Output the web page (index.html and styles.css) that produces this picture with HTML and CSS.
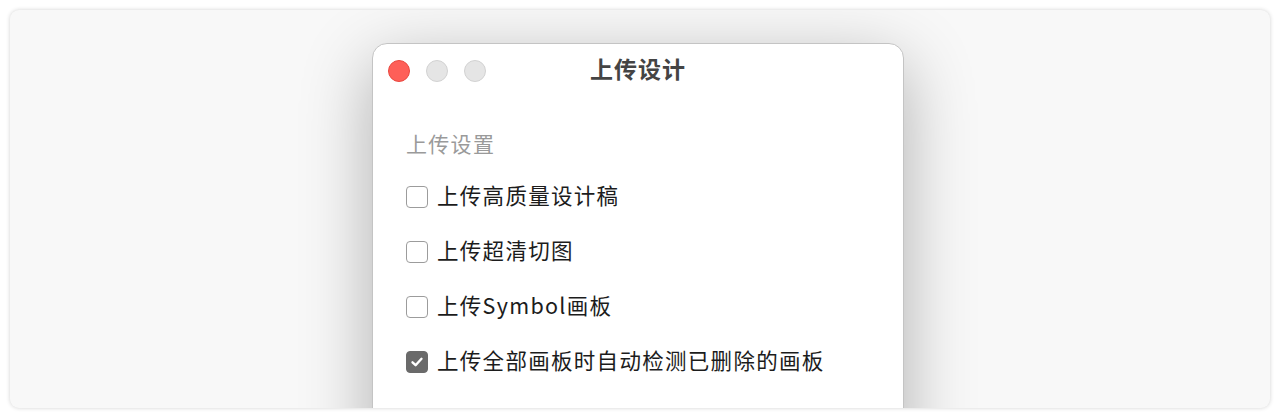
FILE: index.html
```
<!DOCTYPE html>
<html lang="zh-CN">
<head>
    <meta charset="UTF-8">
    <meta name="viewport" content="width=device-width, initial-scale=1.0">
    <title>上传设计</title>
    <link rel="stylesheet" href="styles.css">
</head>
<body>
    <div class="stage">
        <div class="window">
            <div class="titlebar">
                <div class="lights">
                    <span class="light close"></span>
                    <span class="light"></span>
                    <span class="light"></span>
                </div>
                <div class="title">上传设计</div>
                <div></div>
            </div>
            <div class="content">
                <div class="section-title">上传设置</div>
                <label class="option"><span class="box"></span><span class="text">上传高质量设计稿</span></label>
                <label class="option"><span class="box"></span><span class="text">上传超清切图</span></label>
                <label class="option"><span class="box"></span><span class="text">上传Symbol画板</span></label>
                <label class="option">
                    <span class="box checked">
                        <svg width="14" height="14" viewBox="0 0 14 14"><path d="M2.5 7.3 L5.6 10.2 L11.5 3.8" fill="none" stroke="#fff" stroke-width="2.4" stroke-linecap="round" stroke-linejoin="round"/></svg>
                    </span><span class="text">上传全部画板时自动检测已删除的画板</span>
                </label>
            </div>
        </div>
    </div>
</body>
</html>
```

FILE: styles.css
```
body {
    margin: 0;
    padding: 10px;
    background: #fff;
    font-family: "Noto Sans CJK SC", "Noto Sans", sans-serif;
    color: #1c1c1c;
}
.stage {
    height: 398px;
    background: #f8f8f8;
    border-radius: 9px;
    box-shadow: 0 0 4px rgba(0, 0, 0, 0.18);
    overflow: hidden;
    display: flex;
    justify-content: center;
    padding-top: 33px;
    box-sizing: border-box;
}
.window {
    width: 532px;
    height: 420px;
    margin-right: 4px;
    background: #fff;
    border: 1px solid #c4c4c4;
    border-radius: 15px 15px 0 0;
    box-shadow: 0 20px 70px rgba(0, 0, 0, 0.3);
    box-sizing: border-box;
}
.titlebar {
    display: grid;
    grid-template-columns: 1fr auto 1fr;
    align-items: center;
    height: 54px;
    padding: 0 15px;
}
.lights {
    display: flex;
    gap: 16px;
}
.light {
    width: 22px;
    height: 22px;
    border-radius: 50%;
    background: #e5e5e5;
    border: 1px solid #d2d2d2;
    box-sizing: border-box;
}
.light.close {
    background: #fe5f58;
    border-color: #e9483f;
}
.title {
    font-size: 23px;
    font-weight: bold;
    color: #444;
    letter-spacing: 1px;
    margin-bottom: 6px;
}
.content {
    padding: 30px 33px 0;
}
.section-title {
    font-size: 21px;
    line-height: 30px;
    color: #9a9a9a;
    letter-spacing: 1.3px;
    margin-bottom: 11px;
}
.option {
    display: flex;
    align-items: center;
    height: 55px;
    font-size: 21.5px;
    letter-spacing: 1.3px;
}
.text {
    padding-bottom: 5px;
}
.box {
    width: 22px;
    height: 22px;
    border: 1.5px solid #9c9c9c;
    border-radius: 4px;
    box-sizing: border-box;
    margin-right: 9px;
    display: flex;
    align-items: center;
    justify-content: center;
}
.box.checked {
    background: #6a6a6a;
    border-color: #6a6a6a;
}
```
